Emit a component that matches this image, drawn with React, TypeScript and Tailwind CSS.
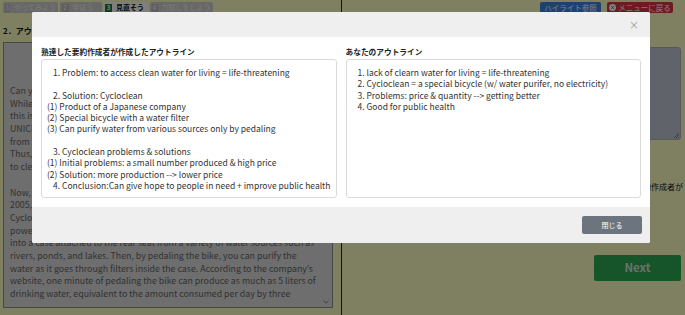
import React from 'react';

// lines behind the modal are only seen up to its left edge
const passage = [
  'Can you',
  'While it',
  'this is a',
  'UNICEF',
  'from the',
  'Thus, for',
  'to clean',
  '',
  'Now, a',
  '2005, a small Japanese company has been making a special bicycle,',
  'Cycloclean, which has a water filter. It does not need electric',
  'power or fuel. First, you pump water through a hose attached to it',
  'into a case attached to the rear seat from a variety of water sources such as',
  'rivers, ponds, and lakes. Then, by pedaling the bike, you can purify the',
  'water as it goes through filters inside the case. According to the company\u2019s',
  'website, one minute of pedaling the bike can produce as much as 5 liters of',
  'drinking water, equivalent to the amount consumed per day by three',
];

const expertOutline: { text: string; indent: boolean }[] = [
  { text: '1. Problem: to access clean water for living = life-threatening', indent: true },
  { text: '', indent: false },
  { text: '2. Solution: Cycloclean', indent: true },
  { text: '(1) Product of a Japanese company', indent: false },
  { text: '(2) Special bicycle with a water filter', indent: false },
  { text: '(3) Can purify water from various sources only by pedaling', indent: false },
  { text: '', indent: false },
  { text: '3. Cycloclean problems & solutions', indent: true },
  { text: '(1) Initial problems: a small number produced & high price', indent: false },
  { text: '(2) Solution: more production --> lower price', indent: false },
  { text: '4. Conclusion:Can give hope to people in need + improve public health', indent: true },
];

const myOutline = [
  '1. lack of clearn water for living = life-threatening',
  '2. Cycloclean = a special bicycle (w/ water purifer, no electricity)',
  '3. Problems: price & quantity --> getting better',
  '4. Good for public health',
];

const tabs = [
  { num: 1, label: 'やってみよう', width: 'w-[55px]' },
  { num: 2, label: '学ぼう', width: 'w-[42px]' },
  { num: 3, label: '見直そう', width: 'w-[45px]', active: true },
  { num: 4, label: '力試しをしよう', width: 'w-[63px]' },
];

function StepTabs() {
  return (
    <div className="flex gap-[1.5px]">
      {tabs.map((tab) => (
        <div
          key={tab.num}
          className={`flex h-[11px] ${tab.width} items-center gap-[4px] rounded-t-[2px] px-[2px] text-[7px] leading-none ${
            tab.active ? 'bg-white font-bold text-[#111]' : 'bg-[#d0d0d0] text-[#f4f4f4]'
          }`}
        >
          <span
            className={`flex h-[8px] w-[7px] items-center justify-center text-[6px] ${
              tab.active ? 'bg-[#1f7a35] text-white' : 'bg-[#bdbdbd] text-white'
            }`}
          >
            {tab.num}
          </span>
          <span className="whitespace-nowrap">{tab.label}</span>
        </div>
      ))}
    </div>
  );
}

function LeftPane() {
  return (
    <div className="flex w-[342px] shrink-0 flex-col border-r border-[#222] pl-[3px] pr-[8px] pt-[2px]">
      <StepTabs />
      <h2 className="mt-[13px] whitespace-nowrap text-[8px] font-bold leading-[10px] text-[#111]">
        2．アウトラインを見直そう
      </h2>
      <div className="relative mt-[6px] h-[266px] overflow-hidden border border-[#8e8e8e] bg-[#dcdcdc] pl-[6px] pt-[42px] text-[8.8px] leading-[12.7px] text-[#666]">
        {passage.map((line, i) => (
          <div key={i} className="h-[12.7px] whitespace-nowrap">
            {line}
          </div>
        ))}
        <svg className="absolute bottom-[3px] right-[3px]" width="6" height="4" viewBox="0 0 6 4">
          <path d="M0.5 0.8 L3 3.2 L5.5 0.8" fill="none" stroke="#777" strokeWidth="0.9" />
        </svg>
      </div>
    </div>
  );
}

function RightPane() {
  return (
    <div className="flex flex-1 flex-col pl-[8px] pr-[4px] pt-[2px]">
      <div className="flex justify-end gap-[6px] pr-[8px]">
        <button className="flex h-[11px] w-[61px] items-center justify-center rounded-[2px] bg-[#3a84e0] text-[7.5px] leading-none text-white">
          ハイライト参照
        </button>
        <button className="flex h-[11px] w-[66px] items-center justify-center gap-[2px] rounded-[2px] bg-[#dc3545] text-[7.5px] leading-none text-white">
          <svg width="7" height="7" viewBox="0 0 10 10">
            <circle cx="5" cy="5" r="5" fill="#fff" />
            <path d="M3.2 3.2 L6.8 6.8 M6.8 3.2 L3.2 6.8" stroke="#dc3545" strokeWidth="1.4" />
          </svg>
          メニューに戻る
        </button>
      </div>
      <div className="relative mt-[34px] h-[93px] rounded-[3px] border border-[#aab0bc] bg-[#c1c7d3]">
        <svg className="absolute bottom-[1px] right-[1px]" width="6" height="6" viewBox="0 0 6 6">
          <path d="M6 1 L1 6 M6 3 L3 6 M6 5 L5 6" stroke="#666" strokeWidth="0.7" />
        </svg>
      </div>
      <p className="-mr-[2px] mt-[42px] whitespace-nowrap text-right text-[8px] leading-[10px] text-[#111]">
        あなたのアウトラインと熟達した要約作成者が
      </p>
      <button className="ml-auto mt-[63px] h-[26px] w-[87px] rounded-[2px] bg-[#2daa55] text-[11.5px] font-bold text-[#d0e6d6]">
        Next
      </button>
    </div>
  );
}

function OutlineModal() {
  return (
    <div className="absolute inset-0 bg-black/50">
      <div className="ml-[32px] mt-[12px] w-[618px] overflow-hidden rounded-[2px] bg-white">
        <div className="flex h-[25px] items-center justify-end bg-[#efefef] pr-[11px]">
          <button className="text-[10px] leading-none text-[#9a9a9a]">×</button>
        </div>
        <div className="grid grid-cols-2 gap-[9px] px-[9px] pb-[9px] pt-[10px]">
          <section>
            <h3 className="mb-[2px] whitespace-nowrap text-[7.7px] font-bold leading-[10px] text-[#222]">
              熟達した要約作成者が作成したアウトライン
            </h3>
            <div className="h-[139px] rounded-[3px] border border-[#dadada] pl-[5px] pt-[7px] text-[8.5px] leading-[11.3px] text-[#333]">
              {expertOutline.map((line, i) => (
                <div key={i} className={`h-[11.3px] whitespace-nowrap ${line.indent ? 'pl-[6px]' : ''}`}>
                  {line.text}
                </div>
              ))}
            </div>
          </section>
          <section>
            <h3 className="mb-[2px] whitespace-nowrap text-[7.7px] font-bold leading-[10px] text-[#222]">
              あなたのアウトライン
            </h3>
            <div className="h-[139px] rounded-[3px] border border-[#dadada] pl-[11px] pt-[7px] text-[8.5px] leading-[11.3px] text-[#333]">
              {myOutline.map((line, i) => (
                <div key={i} className="h-[11.3px] whitespace-nowrap">
                  {line}
                </div>
              ))}
            </div>
          </section>
        </div>
        <div className="flex h-[36px] items-center justify-end bg-[#efefef] pr-[8px]">
          <button className="h-[18px] w-[60px] rounded-[2px] bg-[#6c757d] text-[7px] text-white">閉じる</button>
        </div>
      </div>
    </div>
  );
}

export default function App() {
  return (
    <div className="relative h-[315px] w-[685px] overflow-hidden bg-[#fefec4] font-['Noto_Sans_CJK_JP',sans-serif] text-[#222]">
      <div className="flex h-full">
        <LeftPane />
        <RightPane />
      </div>
      <OutlineModal />
    </div>
  );
}
